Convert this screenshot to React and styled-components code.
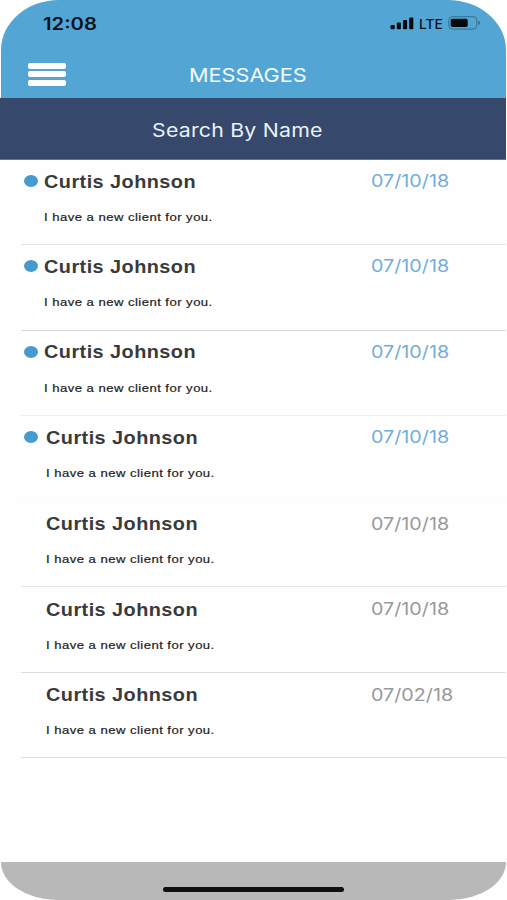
import React from 'react';
import styled, { createGlobalStyle } from 'styled-components';

const GlobalStyle = createGlobalStyle`
  * {
    box-sizing: border-box;
  }
  body {
    margin: 0;
    background: #ffffff;
    font-family: Inter, "Liberation Sans", sans-serif;
  }
`;

const Phone = styled.div`
  width: 507px;
  height: 900px;
  display: flex;
  flex-direction: column;
  overflow: hidden;
  background: #fefefe;
`;

const Header = styled.header`
  height: 98px;
  margin: 0 1px;
  border-radius: 58px 58px 0 0 / 50px 50px 0 0;
  background: #53a6d4;
`;

const StatusBar = styled.div`
  height: 46px;
  padding: 0 25px 0 42px;
  display: flex;
  align-items: center;
  justify-content: space-between;
`;

// wide lettering, the glyphs are stretched sideways from the left edge
const Wide = styled.span`
  display: block;
  white-space: nowrap;
  transform: scaleX(${(p) => p.$x});
  transform-origin: left center;
`;

const Clock = styled(Wide)`
  padding-top: 1px;
  color: #06131c;
  font-size: 17px;
  line-height: 20px;
  font-weight: 600;
`;

const StatusIcons = styled.div`
  display: flex;
  align-items: center;
`;

const Network = styled(Wide)`
  width: 29px;
  margin-left: 5px;
  padding-top: 1px;
  color: #06131c;
  font-size: 13px;
  line-height: 16px;
  font-weight: 500;
`;

const TitleBar = styled.div`
  height: 56px;
  padding-left: 27px;
  display: grid;
  grid-template-columns: 161px 1fr;
  align-items: center;
`;

const MenuButton = styled.button`
  width: 38px;
  height: 23px;
  padding: 0;
  border: 0;
  background: none;
  display: flex;
  flex-direction: column;
  justify-content: space-between;
  cursor: pointer;
`;

const MenuLine = styled.span`
  height: 6px;
  border-radius: 2px;
  background: #ffffff;
`;

const Title = styled(Wide)`
  padding-top: 3px;
  color: #f4fbff;
  font-size: 19px;
  line-height: 24px;
`;

const SearchBar = styled.div`
  height: 62px;
  margin-right: 1px;
  padding: 3px 0 0 152px;
  display: flex;
  align-items: center;
  background: #36486b;
  border-bottom: 1px solid #66728f;
`;

const SearchLabel = styled(Wide)`
  color: #eaf3fc;
  font-size: 18.5px;
  line-height: 24px;
  letter-spacing: 0.2px;
`;

const List = styled.ul`
  flex: 1;
  margin: 0;
  padding: 0 1px 0 21px;
  list-style: none;
`;

const Row = styled.li`
  height: 85.45px;
  padding: ${(p) => (p.$unread ? 10 : 11)}px 0 0 3px;
  display: grid;
  grid-template-columns: ${(p) => (p.$indent ? 22 : 20)}px ${(p) => (p.$indent ? 324.5 : 326.5)}px 1fr;
  grid-template-rows: 22px 28px;
  row-gap: ${(p) => (p.$unread ? 11 : 10.5)}px;
  align-items: center;
  border-bottom: 1px solid ${(p) => p.$line};
`;

const Dot = styled.span`
  width: 14px;
  height: 12px;
  border-radius: 50%;
  background: ${(p) => (p.$unread ? '#459bd0' : 'transparent')};
`;

const Name = styled(Wide)`
  padding-top: 1px;
  color: #3a3a3c;
  font-family: "Liberation Sans", Arial, sans-serif;
  font-size: 17.5px;
  line-height: 22px;
  font-weight: 700;
  letter-spacing: 0.4px;
`;

const DateText = styled(Wide)`
  color: ${(p) => (p.$unread ? '#72aedb' : '#999999')};
  font-size: 17px;
  line-height: 22px;
`;

const Message = styled(Wide)`
  grid-column: 2 / 4;
  color: #1c1c1c;
  font-family: "Liberation Sans", Arial, sans-serif;
  font-size: 11.5px;
  line-height: 16px;
  letter-spacing: 0.4px;
  -webkit-text-stroke: 0.2px #1c1c1c;
`;

const Footer = styled.footer`
  height: 38px;
  margin: 0 1px;
  padding: 0 0 8px 162px;
  display: flex;
  align-items: flex-end;
  background: #b8b8b8;
  border-radius: 0 0 56px 56px / 0 0 38px 38px;
`;

const HomeIndicator = styled.div`
  width: 181px;
  height: 5px;
  border-radius: 3px;
  background: #111111;
`;

function SignalIcon() {
  return (
    <svg width="24" height="13" viewBox="0 0 24 13" fill="#050a0e">
      <rect x="0.5" y="8" width="4.3" height="4.2" rx="1.2" />
      <rect x="6.8" y="5.5" width="4.1" height="6.7" rx="1" />
      <rect x="13" y="3" width="4.1" height="9.2" rx="1" />
      <rect x="19.2" y="0.4" width="4.1" height="11.8" rx="1" />
    </svg>
  );
}

function BatteryIcon() {
  return (
    <svg width="33" height="14" viewBox="0 0 33 14">
      <rect x="0.8" y="0.7" width="28" height="12.4" rx="3.6" fill="none" stroke="#34708f" strokeWidth="1" />
      <rect x="2.7" y="2.7" width="17" height="8.4" rx="1.8" fill="#050a0e" />
      <path d="M30.3 4.6 C32.6 5.4 32.6 8.4 30.3 9.2 Z" fill="#34708f" />
    </svg>
  );
}

const messages = [
  { date: '07/10/18', unread: true, line: '#e3e3e3' },
  { date: '07/10/18', unread: true, line: '#d9d9d9' },
  { date: '07/10/18', unread: true, line: '#eeeeee' },
  { date: '07/10/18', unread: true, indent: true, line: '#fbfbfb' },
  { date: '07/10/18', indent: true, line: '#e6e6e6' },
  { date: '07/10/18', indent: true, line: '#dedede' },
  { date: '07/02/18', indent: true, line: '#dedede' },
];

function App() {
  return (
    <>
      <GlobalStyle />
      <Phone>
        <Header>
          <StatusBar>
            <Clock $x={1.19}>12:08</Clock>
            <StatusIcons>
              <SignalIcon />
              <Network $x={1.06}>LTE</Network>
              <BatteryIcon />
            </StatusIcons>
          </StatusBar>
          <TitleBar>
            <MenuButton aria-label="Menu">
              <MenuLine />
              <MenuLine />
              <MenuLine />
            </MenuButton>
            <Title $x={1.14}>MESSAGES</Title>
          </TitleBar>
        </Header>
        <SearchBar>
          <SearchLabel $x={1.15}>Search By Name</SearchLabel>
        </SearchBar>
        <List>
          {messages.map((msg, i) => (
            <Row key={i} $indent={msg.indent} $unread={msg.unread} $line={msg.line}>
              <Dot $unread={msg.unread} />
              <Name $x={1.135}>Curtis Johnson</Name>
              <DateText $x={1.16} $unread={msg.unread}>{msg.date}</DateText>
              <Message $x={1.14}>I have a new client for you.</Message>
            </Row>
          ))}
        </List>
        <Footer>
          <HomeIndicator />
        </Footer>
      </Phone>
    </>
  );
}

export default App;
